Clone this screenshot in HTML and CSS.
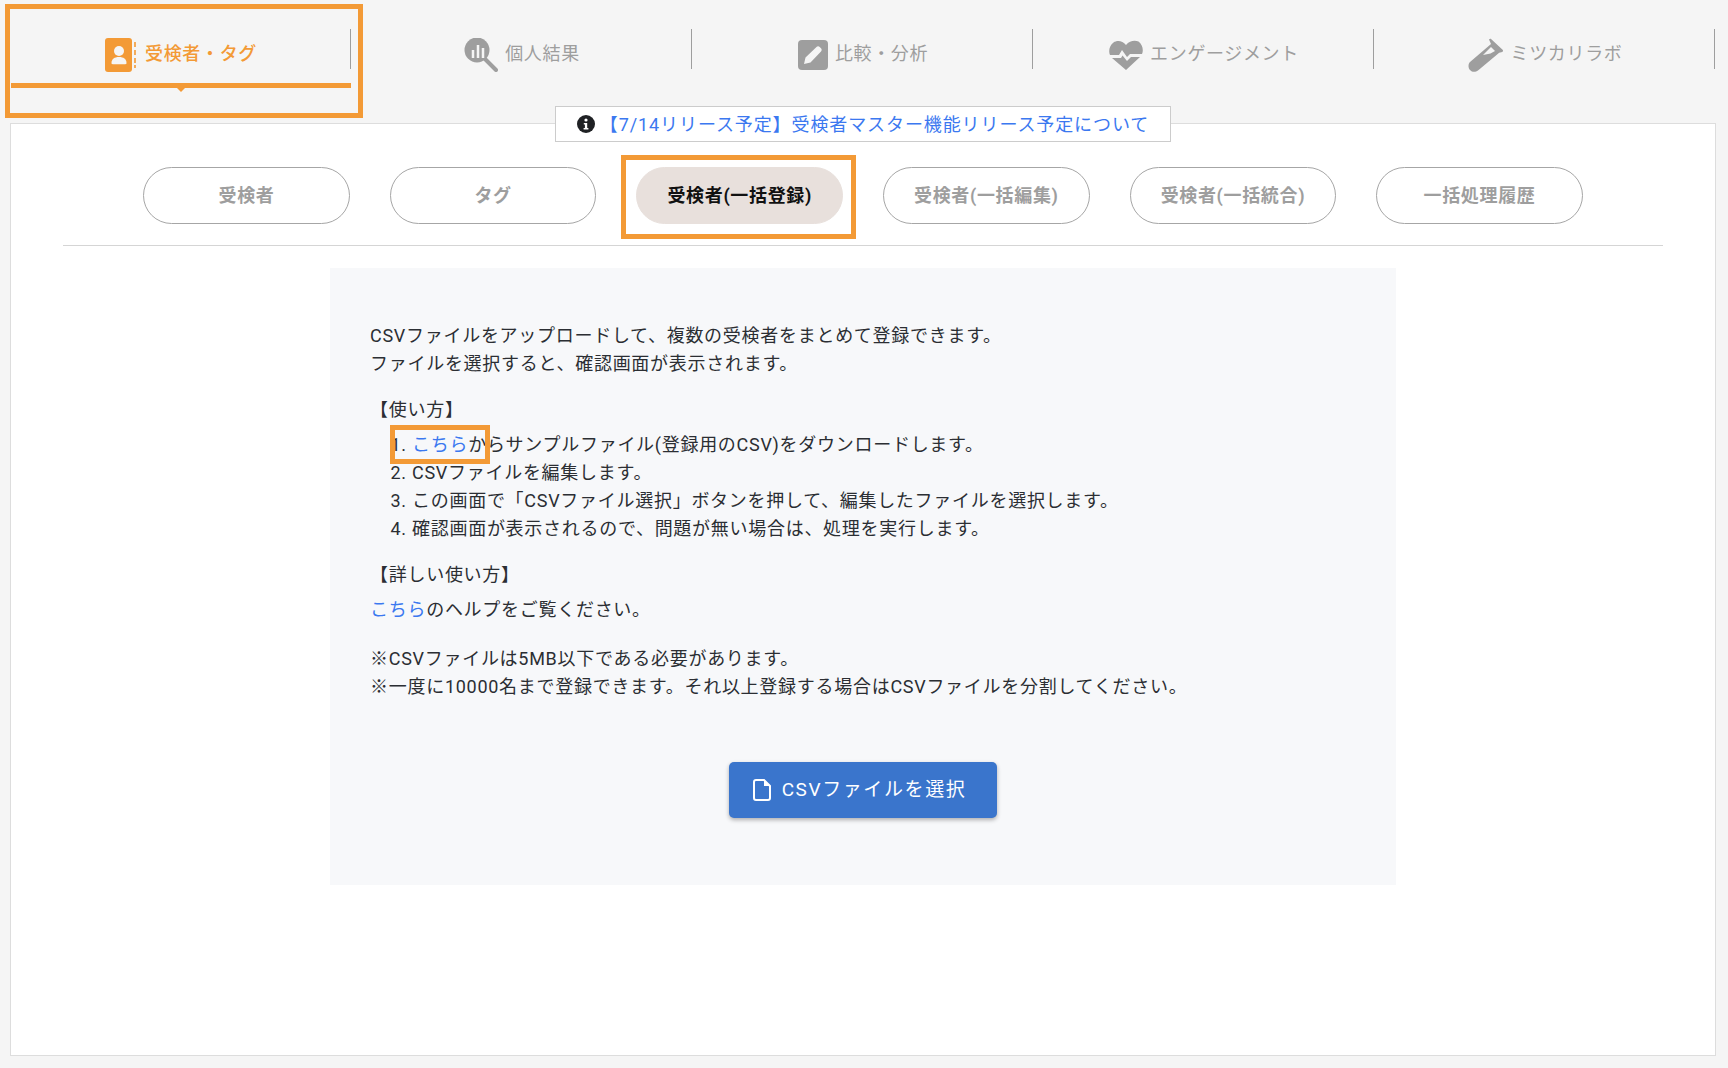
FILE: index.html
```html
<!DOCTYPE html>
<html lang="ja">
<head>
<meta charset="utf-8">
<title>受検者(一括登録)</title>
<link rel="stylesheet" href="styles.css">
</head>
<body>
<nav class="nav">
  <a class="nav-item active">
    <svg class="nav-icon" width="33" height="34" viewBox="0 0 33 34"><rect x="0" y="0" width="27" height="34" rx="3" fill="#f39a36"/><circle cx="14" cy="13" r="5" fill="#f5f5f5"/><path d="M6.500 25c0-4 3-6 7.500-6s7.500 2 7.500 6c0 .8-.5 1.200-1.200 1.200H7.700c-.7 0-1.200-.4-1.200-1.200z" fill="#f5f5f5"/><path d="M30 4v5M30 12v5M30 20v5M30 27v3" stroke="#f39a36" stroke-width="1.600"/></svg>
    <span>受検者・タグ</span>
  </a>
  <a class="nav-item">
    <svg class="nav-icon" width="34" height="34" viewBox="0 0 34 34"><circle cx="13" cy="12" r="12.500" fill="#9e9e9e"/><path d="M21 21l11 11" stroke="#9e9e9e" stroke-width="4" stroke-linecap="round"/><path d="M9 12v8M14 7v13M19 10v10" stroke="#f5f5f5" stroke-width="2.500"/></svg>
    <span>個人結果</span>
  </a>
  <a class="nav-item">
    <svg class="nav-icon" width="30" height="30" viewBox="0 0 30 30"><rect width="30" height="30" rx="4" fill="#9e9e9e"/><path d="M6 24l1.500-6.500L18.500 7c.9-.9 2.300-.9 3.200 0l1.300 1.300c.9.9.9 2.300 0 3.200L12.500 22.500z" fill="#f5f5f5"/></svg>
    <span>比較・分析</span>
  </a>
  <a class="nav-item">
    <svg class="nav-icon heart" width="34" height="30" viewBox="0 0 34 30"><path d="M17 5C13.500.5 8 0 4.500 2.500.5 5.500-.8 11 1 15h9l3-5 5 7 3-3h12c1.800-4 .5-9.500-3.500-12.500C26 0 20.500.5 17 5z" fill="#9e9e9e"/><path d="M3 18h9l1.500-2.500L18 21l4-4h9L17 30z" fill="#9e9e9e"/></svg>
    <span>エンゲージメント</span>
  </a>
  <a class="nav-item">
    <svg class="nav-icon" width="36" height="34" viewBox="0 0 36 34"><path d="M21 1.500c.6-.9 1.600-1 2.300-.3l11.300 10.600c.7.700.5 1.800-.4 2.200l-3 .8L10 32.500c-2.500 2-6 1.800-8-.5s-2-6 0-8L23 6z" fill="#9e9e9e"/><path d="M15 17l8-8 4 4-4.500 2.500z" fill="#f5f5f5"/></svg>
    <span>ミツカリラボ</span>
  </a>
</nav>
<i class="nav-mark"></i>
<main class="card">
  <div class="notice">
    <svg width="18" height="18" viewBox="0 0 18 18"><circle cx="9" cy="9" r="9" fill="#1f2124"/><circle cx="9" cy="5" r="1.600" fill="#fff"/><path d="M6.800 8h3.400v5h1.200v1.500H6.600V13h1.300V9.500H6.800z" fill="#fff"/></svg>
    <a class="link">【7/14リリース予定】受検者マスター機能リリース予定について</a>
  </div>
  <div class="pills">
    <a class="pill">受検者</a>
    <a class="pill">タグ</a>
    <a class="pill current">受検者(一括登録)</a>
    <a class="pill">受検者(一括編集)</a>
    <a class="pill">受検者(一括統合)</a>
    <a class="pill">一括処理履歴</a>
  </div>
  <section class="panel">
    <p class="lines intro">CSVファイルをアップロードして、複数の受検者をまとめて登録できます。<br>ファイルを選択すると、確認画面が表示されます。</p>
    <p class="head usage">【使い方】</p>
    <ol class="steps">
      <li><a class="link">こちら</a>からサンプルファイル(登録用のCSV)をダウンロードします。</li>
      <li>CSVファイルを編集します。</li>
      <li>この画面で「CSVファイル選択」ボタンを押して、編集したファイルを選択します。</li>
      <li>確認画面が表示されるので、問題が無い場合は、処理を実行します。</li>
    </ol>
    <p class="head detail">【詳しい使い方】</p>
    <p class="help"><a class="link">こちら</a>のヘルプをご覧ください。</p>
    <p class="lines notes">※CSVファイルは5MB以下である必要があります。<br>※一度に10000名まで登録できます。それ以上登録する場合はCSVファイルを分割してください。</p>
    <div class="actions">
      <button class="upload" type="button">
        <svg width="18" height="22" viewBox="0 0 18 22"><path d="M1 3a2 2 0 0 1 2-2h8l6 6v12a2 2 0 0 1-2 2H3a2 2 0 0 1-2-2z" fill="none" stroke="#fff" stroke-width="2"/><path d="M11 1v6h6z" fill="#fff"/></svg>
        <span>CSVファイルを選択</span>
      </button>
    </div>
  </section>
</main>
<div class="mark mark-nav"></div>
<div class="mark mark-pill"></div>
<div class="mark mark-link"></div>
</body>
</html>
```
FILE: styles.css
```css
* { box-sizing: border-box; }
html, body { margin: 0; height: 1068px; overflow: hidden; }
body {
  background: #f5f5f5;
  font-family: Roboto, "Noto Sans CJK JP", "Noto Sans", sans-serif;
  color: #2b2e33;
  letter-spacing: .65px;
  position: relative;
}
.nav { display: flex; padding: 29px 0 0 10px; height: 123px; align-items: flex-start; }
.nav-item {
  width: 341px; height: 40px;
  display: flex; align-items: center; justify-content: center; gap: 7px;
  border-right: 1px solid #9e9e9e;
  font-size: 18px; color: #9e9e9e;
  padding: 11px 0 0 2px;
}
.nav-item span { margin-bottom: 6px; }
.nav-item:first-child { box-shadow: -1px 0 0 #9e9e9e; }
.nav-item.active { color: #f39a36; font-weight: 500; }
.nav-mark {
  position: absolute; left: 11px; top: 83px; width: 340px; height: 5px; background: #f39a36;
}
.nav-mark::after {
  content: ""; position: absolute; left: 166px; top: 5px;
  border: 4px solid transparent; border-top-color: #f39a36; border-bottom: 0;
}
.card {
  position: relative;
  margin: 0 12px 0 10px; height: 933px;
  background: #fff; border: 1px solid #ddd;
  display: flex; flex-direction: column; align-items: center;
}
.notice {
  position: absolute; top: -18px; left: 544px; width: 616px; height: 36px;
  background: #fff; border: 1px solid #ccc;
  display: flex; align-items: center; justify-content: center; gap: 5px;
  font-size: 18px; letter-spacing: .9px;
}
.notice a { margin-bottom: 3px; }
.link { color: #3b78f0; }
.pills {
  margin-top: 43px; width: 1600px; height: 79px; padding-bottom: 21px;
  border-bottom: 1px solid #d5d5d5;
  display: flex; justify-content: center; gap: 40px;
}
.pill {
  width: 206.600px; height: 57px; border-radius: 29px;
  border: 1px solid #a6a6a6;
  display: flex; align-items: center; justify-content: center;
  font-size: 18px; font-weight: 700; color: #9e9e9e;
  padding-bottom: 3px;
}
.pill.current { background: #e8e0dc; border-color: #e8e0dc; color: #111; }
.panel {
  margin-top: 22px; width: 1066px; height: 617px;
  background: #f7f8fa; padding: 54px 40px 0;
  font-size: 18px; line-height: 28px; letter-spacing: .72px;
}
.panel p { margin: 0; }
.usage { margin-top: 18px !important; }
.steps { margin: 7px 0 0; padding: 0 0 0 42px; }
.detail { margin-top: 18px !important; }
.help { margin-top: 7px !important; }
.notes { margin-top: 21px !important; }
.actions { margin-top: 61px; display: flex; justify-content: center; }
.upload {
  width: 268px; height: 56px; border: 0; border-radius: 5px;
  background: #3a75cc; color: #fff;
  box-shadow: 0 2px 4px rgba(0,0,0,.3);
  display: flex; align-items: center; justify-content: center; gap: 11px;
  font: 400 19px Roboto, "Noto Sans CJK JP", sans-serif; letter-spacing: 1.600px;
  padding: 0 7px 5px 0;
}
.upload svg { position: relative; top: 2.500px; }
.mark { position: absolute; border: 5px solid #f39a36; }
.mark-nav { left: 5px; top: 4px; width: 358px; height: 114px; }
.mark-pill { left: 621px; top: 155px; width: 235px; height: 84px; }
.mark-link { left: 390px; top: 425px; width: 100px; height: 39px; }
```
